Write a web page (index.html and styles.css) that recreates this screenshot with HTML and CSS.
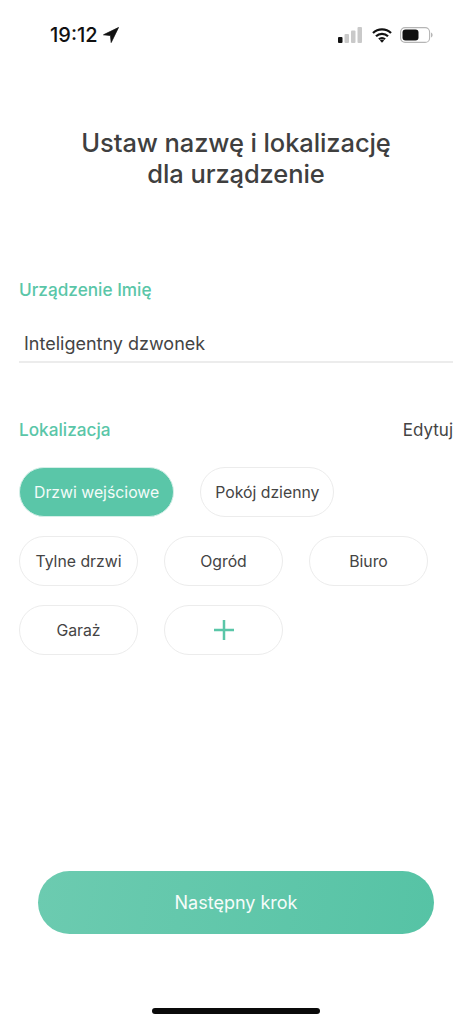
FILE: index.html
```html
<!DOCTYPE html>
<html lang="pl">
<head>
<meta charset="utf-8">
<title>Ustaw nazwę i lokalizację</title>
<link rel="stylesheet" href="styles.css">
</head>
<body>
<div class="screen">
  <header class="status">
    <div class="status-left">
      <span class="time">19:12</span>
      <svg width="16" height="16" viewBox="0 0 16 16"><path d="M15.500.500.500 7.800l7 .7.700 7z" fill="#111" stroke="#111" stroke-width="0.800" stroke-linejoin="round"/></svg>
    </div>
    <div class="status-right">
      <svg class="signal" width="24" height="16" viewBox="0 0 24 16"><rect x="0" y="10" width="4.500" height="6" rx="1" fill="#111"/><rect x="6.500" y="7" width="4.500" height="9" rx="1" fill="#c9c9c9"/><rect x="13" y="3.500" width="4.500" height="12.500" rx="1" fill="#c9c9c9"/><rect x="19.500" y="0" width="4.500" height="16" rx="1" fill="#c9c9c9"/></svg>
      <svg width="20" height="15" viewBox="0 0 20 15"><path d="M1 5a13 13 0 0 1 18 0M4 8.300a8.600 8.600 0 0 1 12 0M7 11.300a4.300 4.300 0 0 1 6 0" fill="none" stroke="#111" stroke-width="2.300"/><path d="M10 14.800 7.900 12.500a3 3 0 0 1 4.200 0z" fill="#111"/></svg>
      <svg width="33" height="16" viewBox="0 0 33 16"><rect x="0.600" y="0.600" width="29" height="14.800" rx="4.500" fill="none" stroke="#b5b5b5" stroke-width="1.100"/><rect x="2.500" y="2.500" width="16" height="11" rx="3" fill="#111"/><path d="M31 5.500c1 .4 1.600 1.300 1.600 2.500s-.6 2.100-1.600 2.500z" fill="#b5b5b5"/></svg>
    </div>
  </header>

  <h1 class="title">Ustaw nazwę i lokalizację<br>dla urządzenie</h1>

  <main class="form">
    <div class="label">Urządzenie Imię</div>
    <div class="field">Inteligentny dzwonek</div>

    <div class="loc-head">
      <span class="label">Lokalizacja</span>
      <span class="edit">Edytuj</span>
    </div>

    <div class="chips">
      <div class="chip-row">
        <span class="chip chip-wide chip-active">Drzwi wejściowe</span>
        <span class="chip chip-wide">Pokój dzienny</span>
      </div>
      <div class="chip-row">
        <span class="chip">Tylne drzwi</span>
        <span class="chip">Ogród</span>
        <span class="chip">Biuro</span>
      </div>
      <div class="chip-row">
        <span class="chip">Garaż</span>
        <span class="chip"><svg width="20" height="20" viewBox="0 0 20 20"><path d="M10 0v20M0 10h20" stroke="#5ac6a8" stroke-width="2.500"/></svg></span>
      </div>
    </div>
  </main>

  <div class="footer">
    <button class="next" type="button">Następny krok</button>
    <div class="home"></div>
  </div>
</div>
</body>
</html>
```
FILE: styles.css
```css
* { box-sizing: border-box; }
html, body { margin: 0; padding: 0; background: #fff; }
body { font-family: Inter, "Noto Sans", "Liberation Sans", sans-serif; color: #444; }
.screen { width: 472px; height: 1024px; display: flex; flex-direction: column; overflow: hidden; }

.status { height: 70px; padding: 24px 39px 0 50px; display: flex; justify-content: space-between; align-items: flex-start; }
.status-left { display: flex; align-items: center; gap: 5px; }
.time { font-size: 20px; line-height: 22px; font-weight: 500; color: #111; }
.status-right { display: flex; align-items: center; gap: 8px; padding-top: 3px; }
.status-right svg, .status-left svg { display: block; }
.signal { margin-right: 2px; }

.title { margin: 57px 0 0; font-size: 25.500px; line-height: 31px; font-weight: 500; text-align: center; color: #3f3f3f; letter-spacing: -0.1px; }

.form { padding: 0 19px; margin-top: 89px; }
.label { font-size: 17.200px; line-height: 24px; font-weight: 500; color: #5ac6a8; }
.field { margin-top: 26px; height: 35px; padding: 4px 5px 0; font-size: 18px; line-height: 24px; color: #444; border-bottom: 2px solid #ececec; }
.loc-head { margin-top: 55px; display: flex; justify-content: space-between; align-items: center; }
.edit { font-size: 17px; line-height: 24px; color: #444; }

.chips { margin-top: 25px; display: flex; flex-direction: column; gap: 19px; }
.chip-row { display: flex; gap: 26px; }
.chip { width: 119px; height: 50px; display: flex; align-items: center; justify-content: center; border: 1px solid #ececec; border-radius: 25px; font-size: 15.800px; color: #444; background: #fff; white-space: nowrap; }
.chip-wide { width: auto; padding: 0 14px; }
.chip-active { background: #5ac6a8; color: #f4fbf9; border-color: #d5efe8; }

.footer { margin-top: auto; display: flex; flex-direction: column; align-items: center; }
.next { width: 396px; height: 63px; border: 0; border-radius: 32px; background: linear-gradient(100deg, #6ccbb0, #56c3a5); color: #f6fcfa; font: 400 18px Inter, "Noto Sans", sans-serif; }
.home { width: 168px; height: 6px; margin: 74px 0 10px; border-radius: 3px; background: #0a0a0a; }
```
